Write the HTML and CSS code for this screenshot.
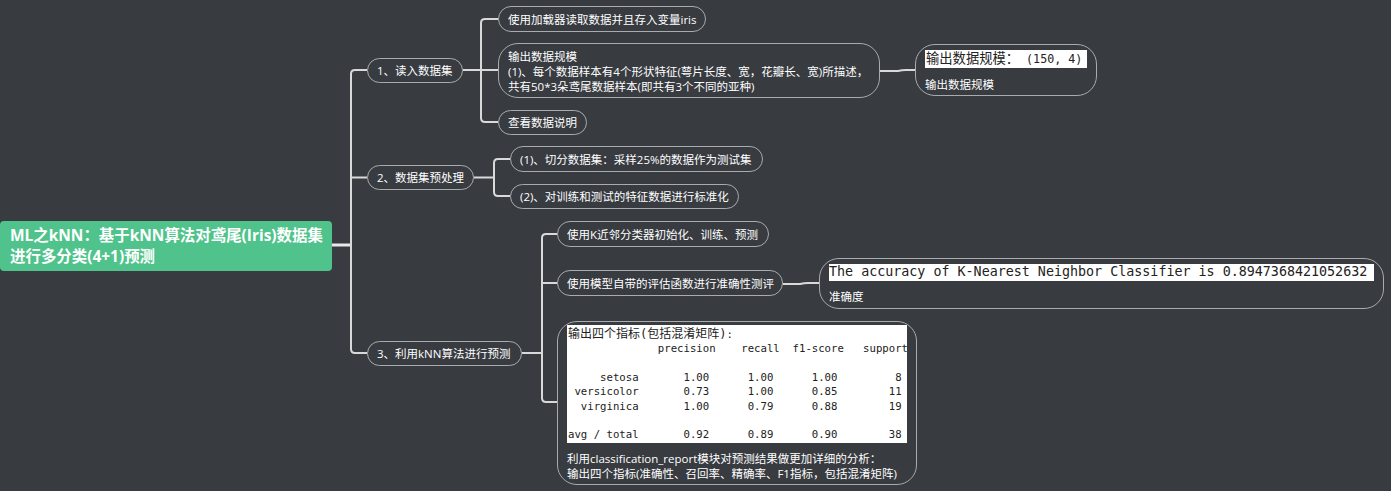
FILE: index.html
```html
<!DOCTYPE html>
<html lang="zh">
<head>
<meta charset="utf-8">
<title>ML之kNN</title>
<link rel="stylesheet" href="styles.css">
</head>
<body>
<main class="canvas">
  <svg class="links" width="1391" height="491" viewBox="0 0 1391 491" fill="none">
    <path class="trunk" d="M332 245H351"/>
    <path d="M367 70H355Q351 70 351 74V349Q351 353 355 353H367M351 177.500H367"/>
    <path d="M463 70H481M498 19H485Q481 19 481 23V118Q481 122 485 122H498M481 70H498"/>
    <path d="M474 177.500H494M510 159H498Q494 159 494 163V192Q494 196 498 196H510"/>
    <path d="M522 353H542M557 234H546Q542 234 542 238V398Q542 402 546 402H557M542 283H557"/>
    <path d="M880 71H898Q902 70 906 70H915"/>
    <path d="M783 284H800Q804 283 808 283H819"/>
  </svg>

  <h1 class="node root">ML之kNN&#xFF1A;基于kNN算法对鸢尾(Iris)数据集<br>进行多分类(4+1)预测</h1>

  <div class="node pill n1">1、读入数据集</div>
  <div class="node pill n2">2、数据集预处理</div>
  <div class="node pill n3">3、利用kNN算法进行预测</div>

  <div class="node pill a1">使用加载器读取数据并且存入变量iris</div>
  <div class="node pill a2">输出数据规模<br>(1)、每个数据样本有4个形状特征(萼片长度、宽&#xFF0C;花瓣长、宽)所描述&#xFF0C;<br>共有50*3朵鸢尾数据样本(即共有3个不同的亚种)</div>
  <div class="node pill a3">查看数据说明</div>
  <div class="node card a2c">
    <div class="shot shot-size"><span class="shot-cjk">输出数据规模&#xFF1A;</span> (150, 4)</div>
    <p class="caption">输出数据规模</p>
  </div>

  <div class="node pill b1">(1)、切分数据集&#xFF1A;采样25%的数据作为测试集</div>
  <div class="node pill b2">(2)、对训练和测试的特征数据进行标准化</div>

  <div class="node pill c1">使用K近邻分类器初始化、训练、预测</div>
  <div class="node pill c2">使用模型自带的评估函数进行准确性测评</div>
  <div class="node card c2c">
    <div class="shot shot-acc">The accuracy of K-Nearest Neighbor Classifier is 0.8947368421052632</div>
    <p class="caption">准确度</p>
  </div>

  <div class="node card c3">
    <pre class="shot report"><span class="report-cjk">输出四个指标(包括混淆矩阵)</span>:
              precision    recall  f1-score   support

     setosa       1.00      1.00      1.00         8
 versicolor       0.73      1.00      0.85        11
  virginica       1.00      0.79      0.88        19

avg / total       0.92      0.89      0.90        38</pre>
    <p class="caption report-caption">利用classification_report模块对预测结果做更加详细的分析&#xFF1A;<br>输出四个指标(准确性、召回率、精确率、F1指标&#xFF0C;包括混淆矩阵)</p>
  </div>
</main>
</body>
</html>
```

FILE: styles.css
```css
html, body {
  margin: 0;
  padding: 0;
  background: #383b40;
}

.canvas {
  position: relative;
  width: 1391px;
  height: 491px;
  overflow: hidden;
  background: #383b40;
  font-family: "Open Sans", "Noto Sans CJK SC", sans-serif;
  font-size: 11.5px;
  line-height: 15px;
  color: #fff;
}

.links {
  position: absolute;
  left: 0;
  top: 0;
}

.links path {
  stroke: #d9d9d9;
  stroke-width: 2;
}

.links .trunk {
  stroke: #e8e8e8;
  stroke-width: 3;
}

.node {
  position: absolute;
  box-sizing: border-box;
  margin: 0;
}

.root {
  left: 0;
  top: 221px;
  width: 332px;
  height: 50px;
  padding: 4px 0 0 10px;
  border-radius: 4px;
  background: #4fc38b;
  font-size: 15.450px;
  line-height: 21px;
  font-weight: 700;
  white-space: nowrap;
}

.pill {
  display: flex;
  align-items: center;
  padding: 0 9px;
  border: 1px solid #a9abad;
  border-radius: 13px;
  white-space: nowrap;
}

.a2 {
  display: block;
  padding-top: 5px;
  border-radius: 20px;
}

.card {
  border: 1px solid #a9abad;
  border-radius: 20px;
  padding: 5px 9px 0;
}

.n1 { left: 367px; top: 58px; width: 96px; height: 25px; }
.n2 { left: 367px; top: 165px; width: 107px; height: 25px; }
.n3 { left: 367px; top: 341px; width: 155px; height: 25px; }
.a1 { left: 498px; top: 6px; width: 208px; height: 26px; }
.a2 { left: 498px; top: 43px; width: 382px; height: 55px; }
.a3 { left: 498px; top: 110px; width: 89px; height: 25px; }
.a2c { left: 915px; top: 44px; width: 182px; height: 52px; }
.b1 { left: 510px; top: 146px; width: 253px; height: 26px; }
.b2 { left: 510px; top: 184px; width: 229px; height: 25px; }
.c1 { left: 557px; top: 221px; width: 212px; height: 26px; }
.c2 { left: 557px; top: 270px; width: 226px; height: 26px; }
.c2c { left: 819px; top: 258px; width: 565px; height: 51px; }
.c3 { left: 557px; top: 321px; width: 360px; height: 164px; padding-top: 3px; }

.shot {
  box-sizing: border-box;
  background: #fff;
  color: #222;
  font-family: "DejaVu Sans Mono", "Noto Sans CJK SC", monospace;
  white-space: pre;
  overflow: hidden;
}

.shot-size {
  height: 18px;
  padding-left: 1px;
  font-size: 11.670px;
  line-height: 18px;
}

.shot-cjk {
  font-size: 13.300px;
}

.shot-acc {
  height: 17px;
  font-size: 13.350px;
  line-height: 16px;
}

.report {
  height: 118px;
  margin: 0;
  padding: 1.500px 0 0 1px;
  font-size: 10.670px;
  line-height: 14.400px;
}

.report-cjk {
  font-size: 12px;
}

.caption {
  margin: 9px 0 0;
}

.c2c .caption {
  margin-top: 8px;
}

.report-caption {
  margin-top: 8px;
}
```
